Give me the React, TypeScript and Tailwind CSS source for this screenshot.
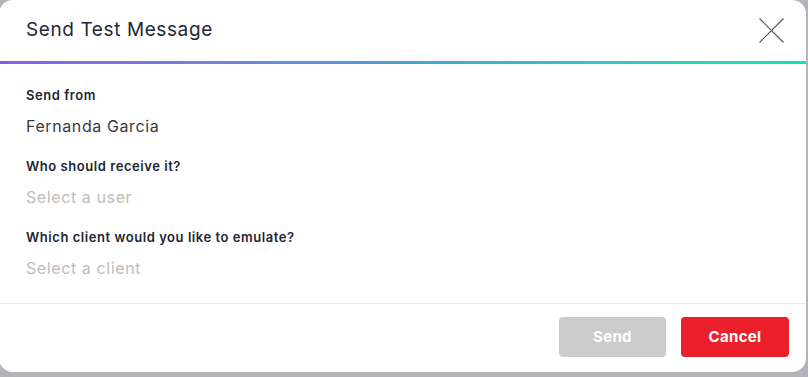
function Field({ label, value, muted }: { label: string; value: string; muted?: boolean }) {
  return (
    <div className="flex flex-col gap-[9px]">
      <div className="text-[13px] leading-[20px] font-semibold tracking-[0.55px] text-[#1e2533]">{label}</div>
      <div className={`text-[16px] leading-[24px] tracking-[0.6px] ${muted ? 'text-[#bdbdbd]' : 'text-[#3a3a3a]'}`}>{value}</div>
    </div>
  );
}

export default function App() {
  return (
    <div className="w-[808px] h-[377px] bg-[#b3b3b9] overflow-hidden" style={{ fontFamily: 'Inter, "Noto Sans", sans-serif' }}>
      <div className="w-[807px] h-[372px] -ml-px bg-white rounded-[14px] flex flex-col overflow-hidden">
        {/* Header */}
        <div className="h-[61px] flex items-center justify-between pl-[27px] pr-[22px]">
          <h2 className="text-[19px] text-[#1e2735] font-normal tracking-[0.6px]">Send Test Message</h2>
          <button className="text-[#555a66] -mt-[1px]" aria-label="Close">
            <svg width="25" height="25" viewBox="0 0 25 25" fill="none" stroke="currentColor" strokeWidth={1.2}>
              <path d="M0.5 0.5L24.5 24.5M24.5 0.5L0.5 24.5" />
            </svg>
          </button>
        </div>
        <div className="h-[3px] bg-gradient-to-r from-[#8a5ce4] via-[#48a0d0] to-[#00e6b8]" />

        {/* Body */}
        <div className="flex flex-col gap-[18px] pl-[27px] pt-[21px] pb-[23px] border-b border-[#e8e8e8]">
          <Field label="Send from" value="Fernanda Garcia" />
          <Field label="Who should receive it?" value="Select a user" muted />
          <Field label="Which client would you like to emulate?" value="Select a client" muted />
        </div>

        {/* Footer */}
        <div className="flex justify-end gap-[15px] pt-[13px] pr-[17px]">
          <button className="w-[107px] h-[40px] rounded-[4px] bg-[#cccccc] text-white text-[15px] font-bold tracking-[0.3px]">
            Send
          </button>
          <button className="w-[108px] h-[40px] rounded-[4px] bg-[#ec1f2d] text-white text-[15px] font-bold tracking-[0.3px]">
            Cancel
          </button>
        </div>
      </div>
    </div>
  );
}
